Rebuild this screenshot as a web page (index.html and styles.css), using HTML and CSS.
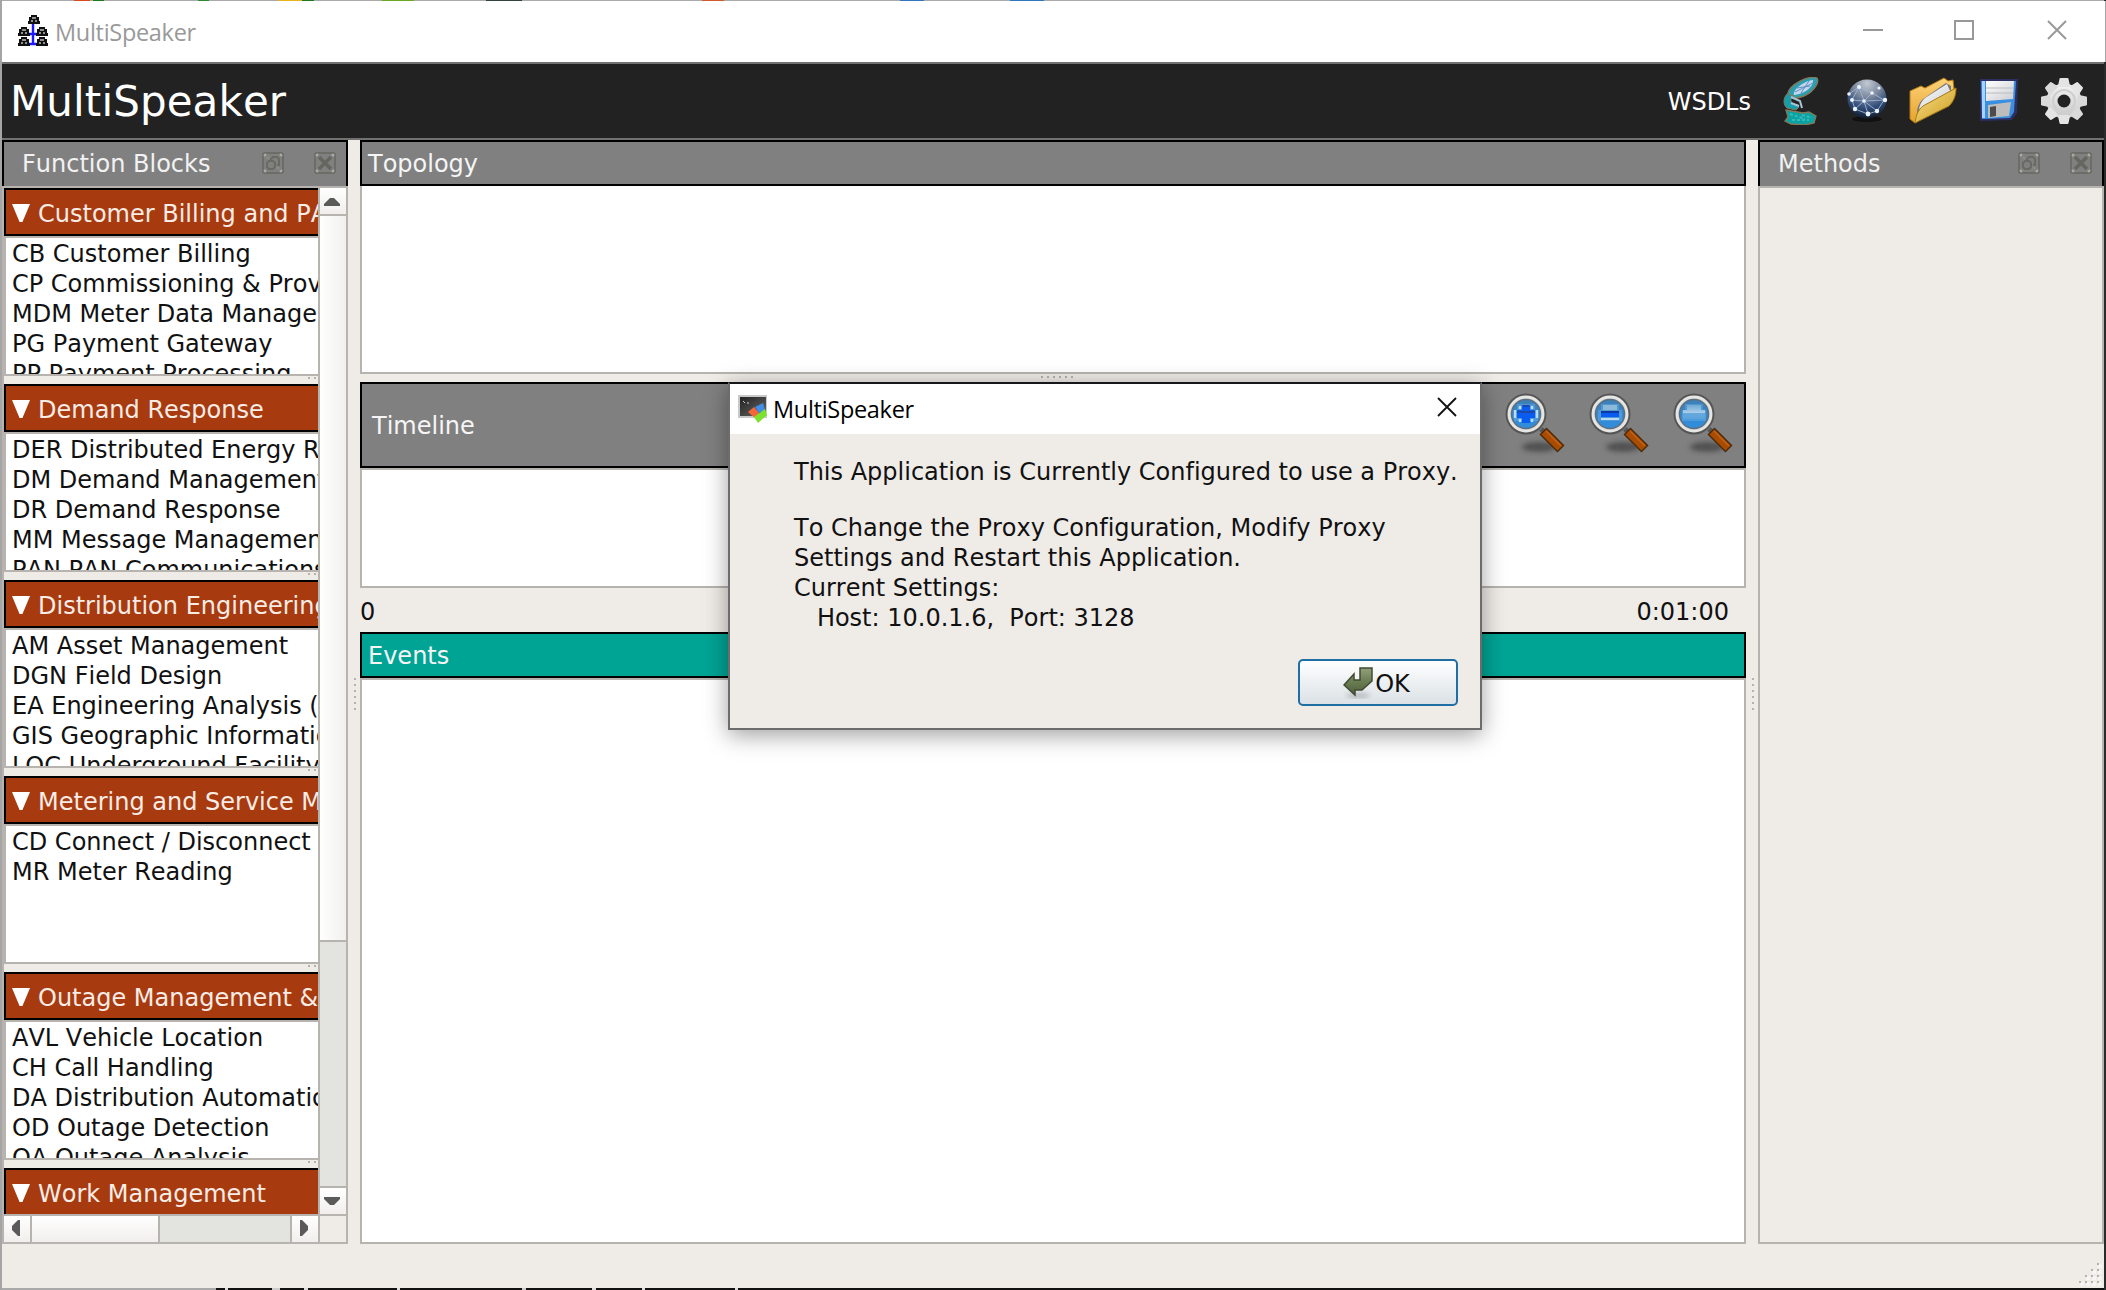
FILE: index.html
```html
<!DOCTYPE html>
<html lang="en">
<head>
<meta charset="utf-8">
<title>MultiSpeaker</title>
<link rel="stylesheet" href="styles.css">
</head>
<body>
<svg width="0" height="0" class="defs">
  <defs>
    <linearGradient id="lens" x1="0" y1="0" x2="0" y2="1"><stop offset="0" stop-color="#3d7fb5"/><stop offset="1" stop-color="#2f8fe0"/></linearGradient>
    <linearGradient id="shine" x1="0" y1="0" x2="0" y2="1"><stop offset="0" stop-color="#6fa9d3"/><stop offset=".55" stop-color="#a9cdea"/><stop offset=".57" stop-color="#69a9dd"/><stop offset="1" stop-color="#5ba3dd"/></linearGradient>
    <linearGradient id="paper" x1="0" y1="0" x2="1" y2="1"><stop offset="0" stop-color="#ffffff"/><stop offset="1" stop-color="#c9ccd2"/></linearGradient>
    <linearGradient id="gold" x1="0" y1="0" x2="1" y2="1"><stop offset="0" stop-color="#fbe08a"/><stop offset="1" stop-color="#c99a1c"/></linearGradient>
    <linearGradient id="goldback" x1="0" y1="0" x2="0" y2="1"><stop offset="0" stop-color="#fdd27a"/><stop offset="1" stop-color="#e6a32c"/></linearGradient>
    <linearGradient id="metal" x1="0" y1="0" x2="0" y2="1"><stop offset="0" stop-color="#f4f4f4"/><stop offset="1" stop-color="#c8c8c8"/></linearGradient>
    <linearGradient id="leaf" x1="0" y1="0" x2="0" y2="1"><stop offset="0" stop-color="#93a07c"/><stop offset=".5" stop-color="#6b7d52"/><stop offset="1" stop-color="#4d5f3b"/></linearGradient>
    <radialGradient id="ball" cx=".5" cy=".1" r=".95"><stop offset="0" stop-color="#c3c9d2"/><stop offset=".4" stop-color="#77849a"/><stop offset=".65" stop-color="#34507c"/><stop offset="1" stop-color="#0a1220"/></radialGradient>
    <linearGradient id="screen" x1="0" y1="0" x2="1" y2="1"><stop offset="0" stop-color="#222"/><stop offset="1" stop-color="#666"/></linearGradient>
    <filter id="soft" x="-30%" y="-60%" width="160%" height="220%"><feGaussianBlur stdDeviation="2.5"/></filter>
    <g id="meter"><path d="M3 0H9V2H11V6H12V9H0V6H1V2H3Z" fill="#111"/><path d="M4 3H8M3 6H5M7 6H9" stroke="#bbb" stroke-width="1.6"/></g>
    <g id="glass">
      <ellipse cx="34" cy="54" rx="17" ry="5" fill="#222" opacity=".5" filter="url(#soft)"/>
      <path d="M36 36L41 41" stroke="#555" stroke-width="5"/>
      <path d="M38 38L56 56" stroke="#4d2a0c" stroke-width="10"/>
      <path d="M39 39L55 55" stroke="#a94c00" stroke-width="7"/>
      <path d="M41 38L56 53" stroke="#c0621a" stroke-width="1.500"/>
      <circle cx="21" cy="21" r="20.5" fill="#555"/>
      <circle cx="21" cy="21" r="17.3" fill="#d7d7d4" stroke="#e6e6e4" stroke-width="2.4"/>
      <circle cx="21" cy="21" r="14.500" fill="url(#lens)" stroke="#5c6f80" stroke-width="1.5"/>
      <path d="M12 11H30V17H33V28H9V17H12Z" fill="#8cc4f2" opacity=".3"/>
    </g>
    <g id="dockframe"><rect x="1" y="1" width="20" height="20" rx="2" fill="none" stroke="#6d6d68" stroke-width="2"/><path d="M2 4L4 2M18 2L20 4M2 18L4 20M18 20L20 18" stroke="#b4aca6" stroke-width="2"/></g>
    <symbol id="dock-float" viewBox="0 0 22 22"><use href="#dockframe"/><path d="M9 9V7L11 5H15L17 7V13H15M7 9H11L13 11V15L11 17H7L5 15V11Z" fill="none" stroke="#6a6a64" stroke-width="2"/><path d="M5 5L7 7M15 15L17 17" stroke="#8f8b86" stroke-width="2"/></symbol>
    <symbol id="dock-close" viewBox="0 0 22 22"><use href="#dockframe"/><path d="M5 5L17 17M17 5L5 17" fill="none" stroke="#666661" stroke-width="3.6"/></symbol>
  </defs>
</svg>
<div class="window">
  <div class="backdrop-top"></div>
  <header class="titlebar">
    <svg class="app-icon" viewBox="0 0 30 32">
      <path d="M15 9V30M9 19H21M10 29H20" stroke="#1a1aff" stroke-width="2.4"/>
      <use href="#meter" x="10" y="0"/><use href="#meter" x="0" y="12"/><use href="#meter" x="18" y="12"/><use href="#meter" x="0" y="22"/><use href="#meter" x="18" y="22"/>
    </svg>
    <span class="caption">MultiSpeaker</span>
    <svg class="controls" viewBox="0 0 204 20"><path d="M0 10H20" stroke="#999" stroke-width="2"/><rect x="92" y="1" width="18" height="18" fill="none" stroke="#999" stroke-width="2"/><path d="M185 1L203 19M203 1L185 19" stroke="#999" stroke-width="2"/></svg>
  </header>
  <div class="toolbar">
    <h1>MultiSpeaker</h1>
    <div class="tools">
      <span class="wsdls">WSDLs</span>
      <svg class="dish" viewBox="0 0 36 48">
        <path d="M34 1C37 6 29 17 18 20C10 22 4 20 5 16C7 8 24 -2 34 1Z" fill="#2a9fb0" stroke="#87785a" stroke-width="1.3"/>
        <path d="M30 3C31 9 22 17 11 18C9 13 21 4 30 3Z" fill="#c6d5ee"/><path d="M12 15L30 6M14 11L27 9M18 16L26 4" stroke="#5b8fc0" stroke-width="1"/>
        <path d="M4 17C0 21 0 28 4 31L13 33L16 30L9 26C7 23 8 20 11 19Z" fill="#169daa" stroke="#87785a"/>
        <path d="M8 20L17 24L19 31M8 26L16 29" fill="none" stroke="#a9c5d8" stroke-width="2"/>
        <path d="M3 33L20 36L26 35L33 39L31 46L22 48L8 47L2 44L5 40Z" fill="#0aa3a3" stroke="#87785a" stroke-width="1.3"/>
        <path d="M7 37L22 42M9 43H26M19 38L29 41" stroke="#38b8b8" stroke-width="2" stroke-dasharray="3 2"/>
      </svg>
      <svg class="globe" viewBox="0 0 42 44">
        <ellipse cx="21" cy="41" rx="15" ry="3" fill="#111"/><circle cx="21" cy="21" r="19.500" fill="url(#ball)"/>
        <path d="M3 16L13 9L26 15L38 22L31 33L22 36L9 31L6 22L13 9M6 22L18 23L26 15M18 23L31 33M9 31L18 23L22 36M38 22L18 23M13 9L18 23" fill="none" stroke="#9db5d6" stroke-width=".9"/>
        <g fill="#e9f4ff"><circle cx="3" cy="16" r="1.8"/><circle cx="13" cy="9" r="2"/><circle cx="26" cy="15" r="1.8"/><circle cx="39" cy="22" r="2.2"/><circle cx="31" cy="33" r="2.2"/><circle cx="22" cy="36" r="2.4"/><circle cx="9" cy="31" r="2.2"/><circle cx="6" cy="22" r="2"/><circle cx="18" cy="23" r="1.8"/><circle cx="33" cy="10" r="1.6"/></g>
      </svg>
      <svg class="folder" viewBox="0 0 48 48">
        <path d="M1 14L12 9L16 11L35 1L39 4L44 3L45 12L6 46L1 42Z" fill="url(#goldback)" stroke="#b07a14"/>
        <path d="M8 37C8 30 10 26 14 22L37 6L42 9L42 18L12 34Z" fill="#777"/><path d="M10 32C11 27 13 24 16 21L38 7L42 16L16 31Z" fill="url(#paper)"/>
        <path d="M6 46C7 38 9 33 14 29L47 11C47 18 45 24 40 29Z" fill="url(#gold)" stroke="#a77a11"/>
      </svg>
      <svg class="floppy" viewBox="0 0 40 44">
        <path d="M1 1H39L38 35L33 42L1 43Z" fill="#2d2f63"/><path d="M2 3H37L35 34L31 40L3 41Z" fill="#3b8fe0"/>
        <path d="M7 3H35L34 21L7 23Z" fill="url(#paper)"/><path d="M7 10H34M7 15H34" stroke="#bcbcbc" stroke-width="1"/>
        <path d="M3 3H6V40H3Z" fill="#a6d3ff"/><path d="M9 27L32 24L30 38L9 40Z" fill="#bdbdbd"/><path d="M11 29L17 28V38L11 39Z" fill="#4b4b4b"/>
      </svg>
      <svg class="gear" viewBox="-24 -24 48 48">
        <g fill="url(#metal)"><circle r="17.500"/><g id="teeth"><path d="M-5 -15L-3.500 -22H3.500L5 -15ZM-5 15L-3.500 22H3.500L5 15Z" fill="#e4e4e4" stroke="#e4e4e4" stroke-width="2" stroke-linejoin="round"/><path d="M15 -5L22 -3.500V3.500L15 5ZM-15 -5L-22 -3.500V3.500L-15 5Z" fill="#dadada" stroke="#dadada" stroke-width="2" stroke-linejoin="round"/></g><use href="#teeth" transform="rotate(45)"/></g>
        <circle r="11" fill="none" stroke="#cfcfcf" stroke-width="2"/><circle r="6.5" fill="#222"/>
      </svg>
    </div>
  </div>
  <main class="workspace">
    <aside class="dock left-dock">
      <div class="dock-title"><span>Function Blocks</span><svg class="dock-btn"><use href="#dock-float"/></svg><svg class="dock-btn"><use href="#dock-close"/></svg></div>
      <div class="scroll-area">
        <div class="viewport">
          <section class="block"><h2><i></i>Customer Billing and PAN</h2><ul><li>CB Customer Billing</li><li>CP Commissioning &amp; Provisioning</li><li>MDM Meter Data Management</li><li>PG Payment Gateway</li><li>PP Payment Processing</li></ul><div class="split"></div></section>
          <section class="block"><h2><i></i>Demand Response</h2><ul><li>DER Distributed Energy Resources</li><li>DM Demand Management</li><li>DR Demand Response</li><li>MM Message Management</li><li>PAN PAN Communications</li></ul><div class="split"></div></section>
          <section class="block"><h2><i></i>Distribution Engineering</h2><ul><li>AM Asset Management</li><li>DGN Field Design</li><li>EA Engineering Analysis (Planning)</li><li>GIS Geographic Information</li><li>LOC Underground Facility</li></ul><div class="split"></div></section>
          <section class="block"><h2><i></i>Metering and Service M</h2><ul><li>CD Connect / Disconnect</li><li>MR Meter Reading</li></ul><div class="split"></div></section>
          <section class="block"><h2><i></i>Outage Management &amp;</h2><ul><li>AVL Vehicle Location</li><li>CH Call Handling</li><li>DA Distribution Automation</li><li>OD Outage Detection</li><li>OA Outage Analysis</li></ul><div class="split"></div></section>
          <section class="block"><h2><i></i>Work Management</h2></section>
        </div>
        <div class="vbar"><div class="arrow up"><svg viewBox="0 0 16 8"><path d="M0 8V6L6 0H10L16 6V8Z"/></svg></div><div class="thumb"></div><div class="trough"></div><div class="arrow down"><svg viewBox="0 0 16 8"><path d="M0 0V2L6 8H10L16 2V0Z"/></svg></div></div>
        <div class="hbar"><div class="arrow back"><svg viewBox="0 0 8 16"><path d="M8 0H6L0 6V10L6 16H8Z"/></svg></div><div class="thumb"></div><div class="trough"></div><div class="arrow fwd"><svg viewBox="0 0 8 16"><path d="M0 0H2L8 6V10L2 16H0Z"/></svg></div></div>
        <div class="corner"></div>
      </div>
    </aside>
    <div class="handle"><b></b></div>
    <div class="center">
      <div class="bar">Topology</div>
      <div class="pane topology"></div>
      <div class="hsplit"><b></b></div>
      <div class="bar timeline"><span>Timeline</span>
        <div class="zooms">
          <svg viewBox="0 0 60 64"><use href="#glass"/><path d="M17 12H25V17H30V25H25V30H17V25H12V17H17Z" fill="#0a5cf0"/><path d="M12 18H30V20H12Z" fill="#1d48a8"/><path d="M18 13H24" stroke="#1d48a8" stroke-width="2"/><path d="M10 17V25M32 17V25M15 13V16M27 13V16M15 26V29M27 26V29" stroke="#b9dcf7" stroke-width="2.400"/></svg>
          <svg viewBox="0 0 60 64"><use href="#glass"/><path d="M14 12H28V17H14Z" fill="#8db9d8"/><path d="M12 18H30V24H12Z" fill="#0a5cf0"/><path d="M12 18H30V20H12Z" fill="#0d3aa0"/><path d="M12 26H30" stroke="#b9d9f3" stroke-width="2"/></svg>
          <svg viewBox="0 0 60 64"><use href="#glass"/><path d="M14 12H28V17H32V26H10V17H14Z" fill="url(#shine)"/></svg>
        </div>
      </div>
      <div class="pane track"></div>
      <div class="scale"><span>0</span><span>0:01:00</span></div>
      <div class="bar events">Events</div>
      <div class="pane log"></div>
    </div>
    <div class="handle"><b></b></div>
    <aside class="dock right-dock">
      <div class="dock-title"><span>Methods</span><svg class="dock-btn"><use href="#dock-float"/></svg><svg class="dock-btn"><use href="#dock-close"/></svg></div>
      <div class="methods-body"></div>
    </aside>
  </main>
  <footer class="statusbar"><svg viewBox="0 0 24 24"><g fill="#f7f5f3"><path d="M20 2h4v4h-4zM14 8h4v4h-4zM20 8h4v4h-4zM8 14h4v4h-4zM14 14h4v4h-4zM20 14h4v4h-4zM2 20h4v4h-4zM8 20h4v4h-4zM14 20h4v4h-4zM20 20h4v4h-4z"/></g><g fill="#b5b1ad"><path d="M19 1h2v2h-2zM13 7h2v2h-2zM19 7h2v2h-2zM7 13h2v2h-2zM13 13h2v2h-2zM19 13h2v2h-2zM1 19h2v2h-2zM7 19h2v2h-2zM13 19h2v2h-2zM19 19h2v2h-2z"/></g></svg></footer>
  <div class="backdrop-bottom"></div>
</div>

<div class="dialog" role="dialog">
  <div class="dialog-title">
    <svg class="dialog-icon" viewBox="0 0 30 28"><rect x="0" y="0" width="29" height="23" fill="#c9c9c9"/><rect x="2" y="2" width="26" height="19" fill="url(#screen)"/><path d="M5 6L7 8M9 8H11" stroke="#ccc"/><path d="M10 17L16 12L22 19L17 23Z" fill="#f2683a"/><path d="M17 12L25 8L27 15L21 18Z" fill="#3f8fe6"/><path d="M16 22L27 14L29 20L20 28Z" fill="#7be32d"/></svg>
    <span>MultiSpeaker</span>
    <svg class="dialog-close" viewBox="0 0 20 20"><path d="M1 1L19 19M19 1L1 19" stroke="#111" stroke-width="1.8"/></svg>
  </div>
  <div class="dialog-body">
    <p>This Application is Currently Configured to use a Proxy.</p>
    <p>To Change the Proxy Configuration, Modify Proxy
Settings and Restart this Application.
Current Settings:
   Host: 10.0.1.6,  Port: 3128</p>
    <button class="ok"><svg viewBox="0 0 30 32"><ellipse cx="15" cy="28.500" rx="12" ry="2.500" fill="#777" opacity=".45" filter="url(#soft)"/><path d="M17 1H29V14L19 23H12V28L1 18L11 7V13H17Z" fill="url(#leaf)" stroke="#414b33" stroke-width="1.5"/></svg><span>OK</span></button>
  </div>
</div>
</body>
</html>
```
FILE: styles.css
```css
* { box-sizing: border-box; margin: 0; padding: 0; }
body { width: 2106px; height: 1290px; overflow: hidden; font: 24px/30px "DejaVu Sans", sans-serif; font-kerning: none; font-variant-ligatures: none; color: #111; background: #222; }
svg { display: block; flex: none; }
.defs { position: absolute; }
.window { display: flex; flex-direction: column; width: 2106px; height: 1290px; border-left: 2px solid #a5a5a5; border-right: 2px solid #2b2b2b; background: #efebe7; }
.backdrop-top { height: 1px; background: linear-gradient(90deg, #aaa 72px, #d84a20 72px 88px, #aaa 88px 91px, #1b7a1b 91px 102px, #aaa 102px 196px, #2c8a2c 196px 207px, #aaa 207px 276px, #e8b41c 276px 300px, #1b7a1b 300px 312px, #aaa 312px 380px, #6aa822 380px 412px, #aaa 412px 484px, #33433a 484px 520px, #aaa 520px 700px, #d05a28 700px 722px, #aaa 722px 898px, #2f78c0 898px 922px, #aaa 922px 1008px, #2f78c0 1008px 1042px, #aaa 1042px); }
.titlebar { display: flex; align-items: center; height: 61px; background: #fff; padding: 0 38px 0 16px; margin-right: -2px; border-right: 1px solid #a5a5a5; }
.app-icon { width: 30px; height: 32px; margin-top: -1px; }
.caption { font: 23.5px/30px "Open Sans", sans-serif; letter-spacing: -.3px; color: #999; margin: 0 auto 0 7px; }
.controls { width: 204px; height: 20px; margin-top: -4px; }
.toolbar { display: flex; justify-content: space-between; align-items: center; height: 78px; background: #222; border: solid #717171; border-width: 2px 0; padding: 0 16px 0 8px; color: #fff; }
h1 { font-weight: 400; font-size: 42px; line-height: 48px; letter-spacing: .1px; margin-top: 1px; }
.tools { display: flex; align-items: center; }
.wsdls { margin: 2px 32px 0 0; }
.dish { width: 36px; height: 48px; margin-right: 27px; }
.globe { width: 42px; height: 44px; margin: -2px 21px 0 0; }
.folder { width: 48px; height: 48px; margin-right: 22px; }
.floppy { width: 40px; height: 44px; margin: -2px 21px 0 0; }
.gear { width: 48px; height: 48px; margin-top: -1px; }
.workspace { display: flex; height: 1104px; }
.dock { width: 346px; display: flex; flex-direction: column; }
.dock-title { display: flex; align-items: center; height: 46px; padding: 0 10px 0 18px; background: #808080; border: solid #000; border-width: 2px 2px 0; color: #f2f2f2; gap: 30px; }
.dock-title span { margin-right: auto; }
.dock-btn { width: 22px; height: 22px; margin-top: -2px; }
.scroll-area { flex: 1; display: grid; grid-template: 1026px 28px / 314px 28px; border: 2px solid #b7b3af; }
.viewport { overflow: hidden; }
.block { width: 360px; height: 196px; display: flex; flex-direction: column; white-space: nowrap; }
h2 { height: 48px; flex: none; display: flex; align-items: center; gap: 8px; font: inherit; color: #f8ece6; background: #a83a0f; border: 2px solid #000; padding-left: 6px; padding-top: 4px; }
h2 i { width: 18px; height: 18px; background: #fff; clip-path: polygon(0 0, 100% 0, 58% 100%, 42% 100%); margin-bottom: 2px; }
ul { height: 140px; border: 2px solid #b7b3af; background: #fff; list-style: none; overflow: hidden; padding: 1px 0 0 6px; }
.split { height: 8px; background: radial-gradient(circle, #b5b1ad 1.1px, transparent 1.2px) 0 -1px / 6px 6px repeat-x; margin: 0 24px 0 302px; }
.vbar { display: flex; flex-direction: column; border-left: 2px solid #b7b3af; }
.arrow { flex: none; width: 26px; height: 26px; display: grid; place-items: center; background: linear-gradient(#fff, #f1efed); }
.arrow svg { fill: #5a5a5a; }
.up svg, .down svg { width: 16px; height: 8px; margin: 0 2px 0 0; }
.down svg { margin-bottom: 1px; }
.up svg { margin-top: 1px; }
.back svg, .fwd svg { width: 8px; height: 16px; margin: 0 2px 2px 0; }
.thumb { background: #fff; }
.trough { background: #e3e3df; }
.vbar .thumb { height: 728px; border: solid #b7b3af; border-width: 2px 0; background: linear-gradient(90deg, #fff, #f1f0ee); }
.vbar .trough { flex: 1; border-bottom: 2px solid #b7b3af; }
.hbar { display: flex; border-top: 2px solid #b7b3af; }
.hbar .thumb { width: 130px; border: solid #b7b3af; border-width: 0 2px; background: linear-gradient(#fff, #f1efed); }
.hbar .trough { flex: 1; border-right: 2px solid #b7b3af; }
.corner { border: solid #b7b3af; border-width: 2px 0 0 2px; }
.handle { width: 12px; display: grid; place-items: center; }
.handle b { width: 6px; height: 36px; background: radial-gradient(circle, #b5b1ad 1.1px, transparent 1.2px) 0 0 / 6px 6px; margin: 3px 0 0 1px; }
.center { width: 1386px; display: flex; flex-direction: column; }
.bar { flex: none; height: 46px; display: flex; align-items: center; padding: 2px 0 0 6px; border: 2px solid #000; background: #808080; color: #f5f5f5; }
.pane { background: #fff; border: 2px solid #b7b3af; }
.topology { height: 188px; border-top: 0; }
.hsplit { height: 8px; display: grid; place-items: center; }
.hsplit b { width: 36px; height: 6px; margin: -2px 0 0 8px; background: radial-gradient(circle, #b5b1ad 1.1px, transparent 1.2px) 0 0 / 6px 6px; }
.timeline { height: 86px; padding: 0 11px 0 10px; justify-content: space-between; }
.timeline span { margin-top: 2px; }
.zooms { display: flex; gap: 24px; margin-top: -1px; }
.zooms svg { width: 60px; height: 64px; }
.track { height: 120px; }
.scale { height: 44px; display: flex; justify-content: space-between; align-items: center; padding: 3px 17px 0 0; }
.events { background: #00a495; }
.log { height: 566px; }
.methods-body { flex: 1; border: 2px solid #b7b3af; }
.statusbar { flex: none; height: 44px; display: flex; justify-content: flex-end; align-items: flex-end; padding: 0 2px 2px; }
.statusbar svg { width: 24px; height: 24px; }
.backdrop-bottom { height: 2px; background: linear-gradient(90deg, #a9a9a9 214px, #111 214px 223px, #ddd 223px 226px, #111 226px 270px, #ccc 270px 278px, #111 278px 302px, #ddd 302px 306px, #111 306px 395px, #ddd 395px 398px, #111 398px 520px, #ccc 520px 524px, #111 524px 590px, #ddd 590px 594px, #111 594px 640px, #ddd 640px 643px, #111 643px 733px, #ddd 733px 736px, #111 736px); }
.dialog { position: absolute; left: 728px; top: 382px; width: 754px; height: 348px; border: 2px solid #6c6c6c; border-top-color: #15171a; background: #efebe7; box-shadow: 0 5px 22px rgba(0,0,0,.38); }
.dialog-title { height: 50px; display: flex; align-items: center; background: #fff; padding: 0 23px 0 8px; font: 23.5px/30px "Open Sans", sans-serif; letter-spacing: -.3px; color: #000; }
.dialog-title span { margin: 0 auto 0 5px; }
.dialog-icon { width: 30px; height: 28px; }
.dialog-close { width: 20px; height: 20px; margin-bottom: 4px; }
.dialog-body { display: flex; flex-direction: column; padding: 23px 22px 22px 64px; height: 294px; }
.dialog-body p { white-space: pre; margin-bottom: 26px; }
.ok { width: 160px; height: 48px; margin: auto 0 0 auto; display: flex; align-items: center; justify-content: center; gap: 2px; font: inherit; color: #111; border: 2px solid #1f6fa5; border-radius: 5px; background: linear-gradient(#fff, #e9edf0 60%, #dbe1e6); padding-right: 3px; }
.ok svg { width: 30px; height: 32px; }
.ok span { margin-top: 2px; }
```
